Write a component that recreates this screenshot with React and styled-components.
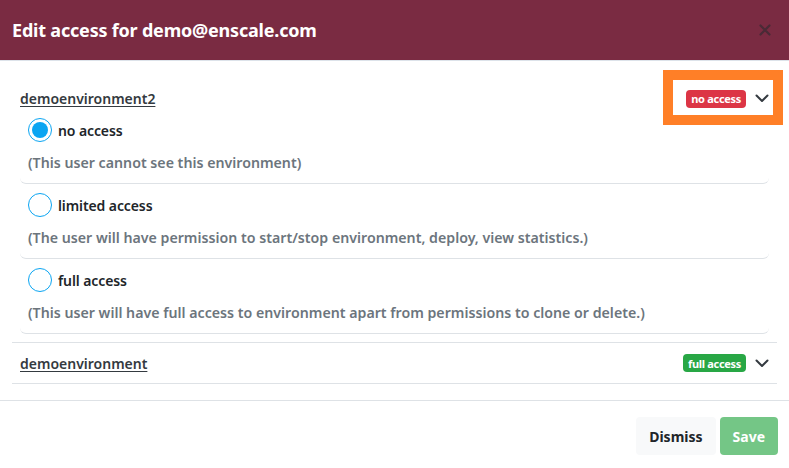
import React, { useState } from "react";
import styled, { createGlobalStyle } from "styled-components";

const GlobalStyle = createGlobalStyle`
    * { box-sizing: border-box; }
    body {
        margin: 0;
        background: #ffffff;
        font-family: "Noto Sans", Roboto, "Liberation Sans", sans-serif;
        color: #212529;
    }
`;

const Modal = styled.div`
    width: 789px;
    height: 468px;
    display: flex;
    flex-direction: column;
    background: #ffffff;
    overflow: hidden;
`;

const Header = styled.div`
    height: 61px;
    flex: none;
    display: flex;
    align-items: center;
    justify-content: space-between;
    padding: 0 12px 1px 12px;
    background: #7a2b42;
    border-bottom: 1px solid #dde3ea;
`;

const Title = styled.h1`
    margin: 0;
    font-size: 18px;
    font-weight: 700;
    color: #ffffff;
    letter-spacing: -0.2px;
`;

const Close = styled.button`
    border: 0;
    background: none;
    padding: 0;
    margin-right: 6px;
    display: flex;
    color: #3a2a33;
    opacity: 0.75;
`;

const Body = styled.div`
    flex: 1;
    padding: 27px 12px 0 12px;
`;

const Section = styled.div`
    border-bottom: 1px solid #dee2e6;
    padding: ${(p) => (p.$open ? "0 8px 8px" : "0 8px")};
`;

const SectionHead = styled.div`
    display: flex;
    align-items: center;
    justify-content: space-between;
    height: ${(p) => (p.$open ? "21px" : "40px")};
`;

const EnvName = styled.a`
    font-size: 14px;
    font-weight: 600;
    color: #343a40;
    text-decoration: underline;
    text-underline-offset: 2px;
`;

const Toggle = styled.div`
    position: relative;
    display: flex;
    align-items: center;
    gap: 9px;
    color: #343a40;

    ${(p) =>
        p.$highlight &&
        `
        &::after {
            content: "";
            position: absolute;
            top: -20px;
            bottom: -17px;
            left: -23px;
            right: -14px;
            border: 10px solid #ff7f27;
            pointer-events: none;
        }
    `}
`;

const Badge = styled.span`
    display: inline-flex;
    align-items: center;
    height: 18px;
    padding: 0 5px;
    border-radius: 4px;
    font-size: 11px;
    font-weight: 700;
    letter-spacing: -0.3px;
    color: #ffffff;
    background: ${(p) => (p.$tone === "danger" ? "#dc3545" : "#28a745")};
`;

const Option = styled.label`
    display: block;
    padding: 9px 8px 10px 8px;
    border-bottom: 1px solid #dee2e6;
    border-radius: 6px;
    cursor: pointer;
`;

const OptionRow = styled.div`
    display: flex;
    align-items: center;
    height: 24px;
    gap: 6px;
`;

const Radio = styled.span`
    width: 24px;
    height: 24px;
    flex: none;
    border-radius: 50%;
    border: 1.5px solid #0ba5f2;
    background: #ffffff;
    display: flex;
    align-items: center;
    justify-content: center;

    &::after {
        content: "";
        width: 16px;
        height: 16px;
        border-radius: 50%;
        background: ${(p) => (p.$checked ? "#0ba5f2" : "transparent")};
    }
`;

const OptionLabel = styled.span`
    font-size: 14px;
    font-weight: 600;
    color: #212529;
    letter-spacing: -0.1px;
`;

const OptionHint = styled.div`
    margin-top: 11px;
    height: 20px;
    line-height: 20px;
    font-size: 14.2px;
    font-weight: 600;
    color: #6c757d;
`;

const Footer = styled.div`
    flex: none;
    display: flex;
    justify-content: flex-end;
    gap: 4px;
    border-top: 1px solid #dee2e6;
    padding: 16px 11px 13px 0;
    margin-top: 16px;
`;

const Button = styled.button`
    height: 38px;
    border: 0;
    border-radius: 4px;
    padding: 0 13px;
    font-family: inherit;
    font-size: 14px;
    font-weight: 700;
    color: ${(p) => (p.$primary ? "#ffffff" : "#212529")};
    background: ${(p) => (p.$primary ? "#74c686" : "#f8f9fa")};
`;

const Chevron = () => (
    <svg width="14" height="9" viewBox="0 0 14 9" fill="none">
        <path d="M1.5 1.5 L7 7 L12.5 1.5" stroke="currentColor" strokeWidth="2" strokeLinecap="round" strokeLinejoin="round" />
    </svg>
);

const options = [
    { key: "none", label: "no access", hint: "(This user cannot see this environment)" },
    {
        key: "limited",
        label: "limited access",
        hint: "(The user will have permission to start/stop environment, deploy, view statistics.)",
    },
    {
        key: "full",
        label: "full access",
        hint: "(This user will have full access to environment apart from permissions to clone or delete.)",
    },
];

const App = () => {
    const [access, setAccess] = useState("none");

    return (
        <Modal>
            <GlobalStyle />
            <Header>
                <Title>Edit access for demo@enscale.com</Title>
                <Close aria-label="close">
                    <svg width="12" height="12" viewBox="0 0 12 12">
                        <path d="M1.5 1.5 L10.5 10.5 M10.5 1.5 L1.5 10.5" stroke="currentColor" strokeWidth="2.2" strokeLinecap="round" />
                    </svg>
                </Close>
            </Header>

            <Body>
                <Section $open>
                    <SectionHead $open>
                        <EnvName>demoenvironment2</EnvName>
                        <Toggle $highlight>
                            <Badge $tone="danger">no access</Badge>
                            <Chevron />
                        </Toggle>
                    </SectionHead>

                    {options.map((o) => (
                        <Option key={o.key} onClick={() => setAccess(o.key)}>
                            <OptionRow>
                                <Radio $checked={access === o.key} />
                                <OptionLabel>{o.label}</OptionLabel>
                            </OptionRow>
                            <OptionHint>{o.hint}</OptionHint>
                        </Option>
                    ))}
                </Section>

                <Section>
                    <SectionHead>
                        <EnvName>demoenvironment</EnvName>
                        <Toggle>
                            <Badge $tone="success">full access</Badge>
                            <Chevron />
                        </Toggle>
                    </SectionHead>
                </Section>
            </Body>

            <Footer>
                <Button>Dismiss</Button>
                <Button $primary disabled>Save</Button>
            </Footer>
        </Modal>
    );
};

export default App;
